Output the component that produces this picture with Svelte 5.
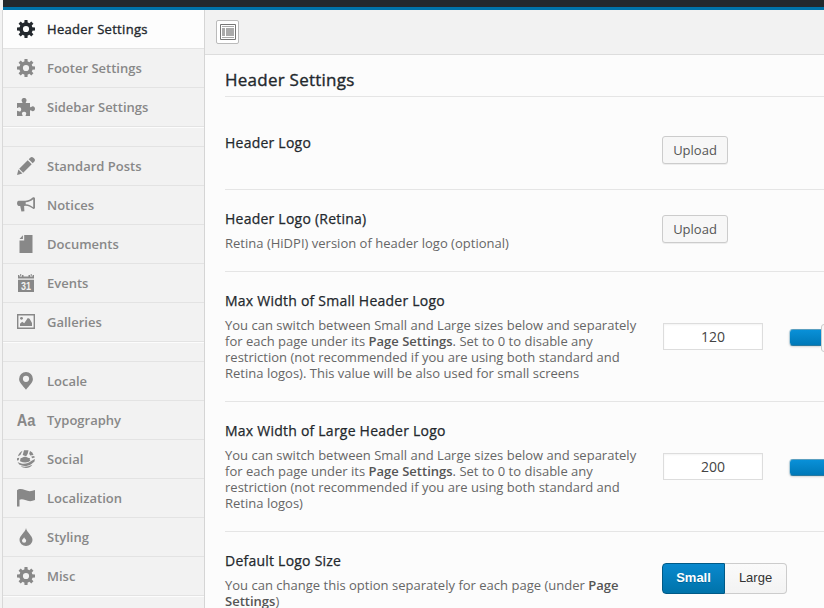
<script>
  const groups = [
    [
      { label: 'Header Settings', icon: 'gear', active: true },
      { label: 'Footer Settings', icon: 'gear' },
      { label: 'Sidebar Settings', icon: 'puzzle' }
    ],
    [
      { label: 'Standard Posts', icon: 'pencil' },
      { label: 'Notices', icon: 'megaphone' },
      { label: 'Documents', icon: 'document' },
      { label: 'Events', icon: 'calendar' },
      { label: 'Galleries', icon: 'image' }
    ],
    [
      { label: 'Locale', icon: 'pin' },
      { label: 'Typography', icon: 'type' },
      { label: 'Social', icon: 'globe' },
      { label: 'Localization', icon: 'flag' },
      { label: 'Styling', icon: 'drop' },
      { label: 'Misc', icon: 'gear' }
    ]
  ];
  const teeth = [0, 45, 90, 135, 180, 225, 270, 315];
</script>

{#snippet icon(name)}
  <svg class="icon" viewBox="0 0 18 18" width="18" height="18" fill="currentColor">
    {#if name === 'gear'}
      <circle cx="9" cy="9" r="4.9" fill="none" stroke="currentColor" stroke-width="3.6" />
      {#each teeth as angle}
        <path d="M7.3 3.2 7.5 0h3l.2 3.2z" transform="rotate({angle} 9 9)" />
      {/each}
    {:else if name === 'puzzle'}
      <path d="M0 5h4.8c.7 0 .9-.5.4-1.100C3.900 2.200 5 0 7.100 0s3.200 2.200 1.900 3.900c-.5.6-.3 1.100.4 1.100H13v3.400c0 .8.600 1 1.200.5C15.800 7.500 18 8.500 18 10.700s-2.200 3.200-3.800 1.800c-.6-.5-1.200-.3-1.200.5v5H9.200c-.7 0-.9-.5-.4-1.100 1.100-1.500.2-3.200-1.700-3.200s-2.800 1.700-1.700 3.200c.5.6.3 1.100-.4 1.100H0v-4.600c0-.7.500-.9 1.100-.4 1.500 1.100 3.100.2 3.100-1.600S2.600 8.700 1.100 9.800C.5 10.300 0 10.100 0 9.400z" />
    {:else if name === 'pencil'}
      <path d="M10.700 3.300l4 4-8.500 8.500-4-4zM1.400 12.600l4 4L0 18zM11.700 2.300l1.500-1.500c1-1.100 2.200-1 3.200 0l.8.800c1 1 1.100 2.200 0 3.200l-1.500 1.500z" />
    {:else if name === 'megaphone'}
      <path fill-rule="evenodd" d="M1.500 4.700h7C12 4.700 14.500 2.500 16 1.300c1-.5 2 .2 2 1.200v9.200c0 1-1 1.500-1.900 1C14 11.300 12 10 8.300 9.800l-1.200.2.3 5.200-3 .3-1.200-5.600H1.500Q0 9.500 0 7.300T1.500 4.700zM8.700 6.300v2c3.200.2 5.600 1.500 7.500 3V3.200c-2 1.700-4.400 2.900-7.500 3.100z" />
    {:else if name === 'document'}
      <path d="M7.200 0h8.300v18h-13V5.400h4.700zM5.900.3v3.800H2.500z" />
    {:else if name === 'calendar'}
      <path d="M1 1h1.500v1.400H5V1h1.500v1.400h5V1H13v1.400h2.500V1H17v3.500H1zM1 5.800h16V18H1z" />
      <path class="cut" d="M2.700 0h2v2h-2zM13.200 0h2v2h-2z" />
      <path d="M3.200 0h1v2h-1zM13.700 0h1v2h-1z" />
      <text class="day" x="4" y="16" textLength="10" lengthAdjust="spacingAndGlyphs">31</text>
    {:else if name === 'image'}
      <path fill-rule="evenodd" d="M0 1h18v15H0zM1.400 2.400v12.200h15.200V2.400z" />
      <circle cx="4.500" cy="5.300" r="1.400" />
      <path d="M3 13V10.800l2.200-2 2 1.500 3.600-5.200 1.800.7 2.400 4.200V13z" />
    {:else if name === 'pin'}
      <path fill-rule="evenodd" d="M9 0a6.900 6.900 0 0 1 6.900 6.900C15.900 11 12 13.500 9 17.700 6 13.500 2.100 11 2.100 6.900A6.900 6.900 0 0 1 9 0zM9 3.700a3.100 3.100 0 1 0 0 6.200 3.100 3.100 0 0 0 0-6.200z" />
    {:else if name === 'type'}
      <text class="aa" x="-.2" y="15" textLength="18.700" lengthAdjust="spacingAndGlyphs">Aa</text>
    {:else if name === 'globe'}
      <path d="M5.500.8 3.400 5.100.9 6.300C1.700 3.700 3.300 1.800 5.500.8zM7 .3h4.500l-.8 3.500-1.500 2.500L7.600 5.800 5.700 4.900zM13 1l2.300 1.600L16.500 5l-3.300.5-1-1.800z" />
      <path d="M3.500 8.300C5 8 6 6.800 8 6.800s3 1.300 5.200 1.500c-.8 1-.5 1.600.3 2.300-2 2.200-6.500 2.700-10.500.6zM0 8.200l2.300-.5L1.600 10.300 0 10.600zM.6 12c4.500 2.800 10 2.300 14-1.200l3.300-1.900-.4 2.600-3 2.500c-4 2.500-8.500 2.700-12.300.6zM3.700 16.300c3.700.8 7.500.5 11.700-1.500C13.800 17 11.500 18 9 18c-2 0-3.800-.6-5.300-1.700zM14.300 6.500l2.900-.4.6 1.500-2.700.7z" />
    {:else if name === 'flag'}
      <path d="M0 1.200c1.700-1.500 5-1.500 8-.1 3.500 1.600 6.600 1.300 10-.1v10c-3.600 1.700-6.800 1.300-9.800 0-2.300-1-4.200-1.200-5.700-.2v6.800H0z" />
    {:else if name === 'drop'}
      <path fill-rule="evenodd" d="M9 0c.8 4.700 6.500 7.300 6.500 12a6.500 6 0 0 1-13 0C2.500 7.300 8.200 4.700 9 0zM7.100 9.300c-.4 1.400-2.100 2.100-2.100 3.500a2.100 2 0 0 0 4.200 0c0-1.400-1.700-2.100-2.100-3.500z" />
    {/if}
  </svg>
{/snippet}

<div class="page">
  <div class="adminbar"></div>
  <div class="body">
    <nav>
      {#each groups as group, g}
        <ul class:spaced={g > 0}>
          {#each group as item}
            <li class:active={item.active}>
              {@render icon(item.icon)}
              <span>{item.label}</span>
            </li>
          {/each}
        </ul>
      {/each}
    </nav>
    <main>
      <div class="toolbar">
        <button class="layout" aria-label="Layout">
          <svg width="16" height="16" viewBox="0 0 16 16">
            <path d="M.5.500h15v15H.5z" fill="#fff" stroke="#777" />
            <path d="M2 2h12v1H2zM2 4h3v8H2zM6 4h8v8H6zM2 13h12v1H2z" fill="#aaa" />
          </svg>
        </button>
      </div>
      <div class="content">
        <h1>Header Settings</h1>
        <section class="first">
          <div class="info"><h2>Header Logo</h2></div>
          <div class="control"><button class="upload">Upload</button></div>
        </section>
        <section>
          <div class="info">
            <h2>Header Logo (Retina)</h2>
            <p>Retina (HiDPI) version of header logo (optional)</p>
          </div>
          <div class="control"><button class="upload">Upload</button></div>
        </section>
        <section>
          <div class="info">
            <h2>Max Width of Small Header Logo</h2>
            <p>You can switch between Small and Large sizes below and separately<br />for each page under its <b>Page Settings</b>. Set to 0 to disable any<br />restriction (not recommended if you are using both standard and<br />Retina logos). This value will be also used for small screens</p>
          </div>
          <div class="control range">
            <input value="120" />
            <div class="track short"></div>
            <div class="handle"></div>
          </div>
        </section>
        <section>
          <div class="info">
            <h2>Max Width of Large Header Logo</h2>
            <p>You can switch between Small and Large sizes below and separately<br />for each page under its <b>Page Settings</b>. Set to 0 to disable any<br />restriction (not recommended if you are using both standard and<br />Retina logos)</p>
          </div>
          <div class="control range">
            <input value="200" />
            <div class="track"></div>
          </div>
        </section>
        <section>
          <div class="info">
            <h2>Default Logo Size</h2>
            <p>You can change this option separately for each page (under <b>Page<br />Settings</b>)</p>
          </div>
          <div class="control switch">
            <button class="on">Small</button><button class="off">Large</button>
          </div>
        </section>
      </div>
    </main>
  </div>
</div>

<style>
  :global(body) { overflow: hidden; }
  .page {
    width: 824px;
    height: 608px;
    overflow: hidden;
    box-sizing: border-box;
    display: flex;
    flex-direction: column;
    font-family: 'Open Sans', sans-serif;
    background: #f3f3f3;
    padding-left: 2px;
  }
  .adminbar {
    flex: none;
    height: 7px;
    margin-left: 1px;
    background: #23282d;
    border-bottom: 3px solid #0073aa;
  }
  .body { flex: 1; min-height: 0; display: flex; border-left: 1px solid #d8d8d8; }
  nav {
    width: 201px;
    flex: none;
    background: #f2f2f2;
    border-right: 1px solid #d5d5d5;
  }
  ul { list-style: none; margin: 0; padding: 0; box-shadow: 0 1px 0 #fcfcfc; }
  ul.spaced { margin-top: 19px; border-top: 1px solid #e3e3e3; }
  li {
    height: 38px;
    display: flex;
    align-items: center;
    gap: 12px;
    padding-left: 14px;
    border-bottom: 1px solid #e3e3e3;
    color: #888;
    font-size: 13px;
    font-weight: 600;
    line-height: 18px;
    white-space: nowrap;
  }
  li.active { background: #fdfdfd; color: #23282d; }
  li.active span {
    font-weight: 400;
    letter-spacing: 0.3px;
    -webkit-text-stroke: 0.35px currentColor;
  }
  .icon { flex: none; display: block; overflow: visible; }
  .cut { fill: #f2f2f2; }
  .day { font: bold 10.5px 'Liberation Sans', sans-serif; fill: #f2f2f2; }
  .aa { font: bold 17px 'Liberation Sans', sans-serif; }
  main { flex: 1; min-width: 0; background: #fcfcfc; }
  .toolbar {
    height: 45px;
    box-sizing: border-box;
    padding: 10px 11px;
    background: #f2f2f2;
    border-bottom: 1px solid #ddd;
  }
  .layout {
    width: 23px;
    height: 24px;
    padding: 0;
    display: flex;
    align-items: center;
    justify-content: center;
    border: 1px solid #bbb;
    border-radius: 2px;
    background: #fff;
  }
  .content { margin-left: 20px; }
  h1 {
    margin: 0;
    height: 41px;
    line-height: 50px;
    font-size: 17px;
    font-weight: 400;
    letter-spacing: 0.25px;
    -webkit-text-stroke: 0.35px currentColor;
    color: #23282d;
    border-bottom: 1px solid #e5e5e5;
  }
  section { display: flex; align-items: flex-start; border-bottom: 1px solid #e5e5e5; }
  .info { width: 437px; flex: none; padding: 19px 0 20px; white-space: nowrap; }
  .first { height: 92px; }
  .first .info { padding-top: 36px; }
  .first .control { padding-top: 39px; }
  h2 {
    margin: 0 0 6px;
    font-size: 14px;
    line-height: 20px;
    font-weight: 400;
    letter-spacing: 0.23px;
    -webkit-text-stroke: 0.25px currentColor;
    color: #23282d;
  }
  p { margin: 0; font-size: 13px; line-height: 16px; color: #666; letter-spacing: 0.01px; }
  b { font-weight: 600; color: #555; }
  .control { display: flex; padding-top: 25px; }
  button { font-family: 'Open Sans', sans-serif; box-sizing: border-box; }
  .upload {
    width: 66px;
    height: 28px;
    padding: 0;
    font-size: 13px;
    color: #555;
    background: #f7f7f7;
    border: 1px solid #ccc;
    border-radius: 3px;
    box-shadow: 0 1px 0 rgba(0, 0, 0, 0.06);
  }
  .range { padding-top: 51px; padding-left: 1px; }
  input {
    box-sizing: border-box;
    width: 100px;
    height: 27px;
    padding: 0;
    border: 1px solid #ddd;
    background: #fff;
    box-shadow: inset 0 1px 2px rgba(0, 0, 0, 0.05);
    text-align: center;
    font: 14px 'Open Sans', sans-serif;
    color: #444;
  }
  .track {
    box-sizing: border-box;
    width: 60px;
    flex: none;
    height: 17px;
    margin: 6px 0 0 26px;
    border: 1px solid;
    border-color: #5a9fc0 #0073aa #2879a0 #b5cfdb;
    border-radius: 4px;
    background: linear-gradient(#0990d8, #0079b8);
    box-shadow: 0 1px 2px rgba(0, 0, 0, 0.15);
  }
  .short { width: 32px; border-radius: 4px 0 0 4px; border-right: 0; }
  .handle {
    box-sizing: border-box;
    flex: none;
    width: 20px;
    height: 28px;
    margin-top: 1px;
    border: 1px solid #ccc;
    border-radius: 3px;
    background: #f9f9f9;
  }
  .switch { padding-top: 31px; }
  .switch button {
    height: 31px;
    padding: 0 0 2px;
    font: 13px 'Liberation Sans', sans-serif;
  }
  .switch .on {
    width: 63px;
    font-weight: bold;
    color: #fff;
    text-shadow: 0 1px 0 rgba(0, 0, 0, 0.2);
    border: 1px solid #005a87;
    border-radius: 4px 0 0 4px;
    background: linear-gradient(#0989ce, #0073aa);
  }
  .switch .off {
    width: 62px;
    color: #333;
    border: 1px solid #ccc;
    border-left: 0;
    border-radius: 0 4px 4px 0;
    background: linear-gradient(#fafafa, #f3f3f3);
  }
</style>
